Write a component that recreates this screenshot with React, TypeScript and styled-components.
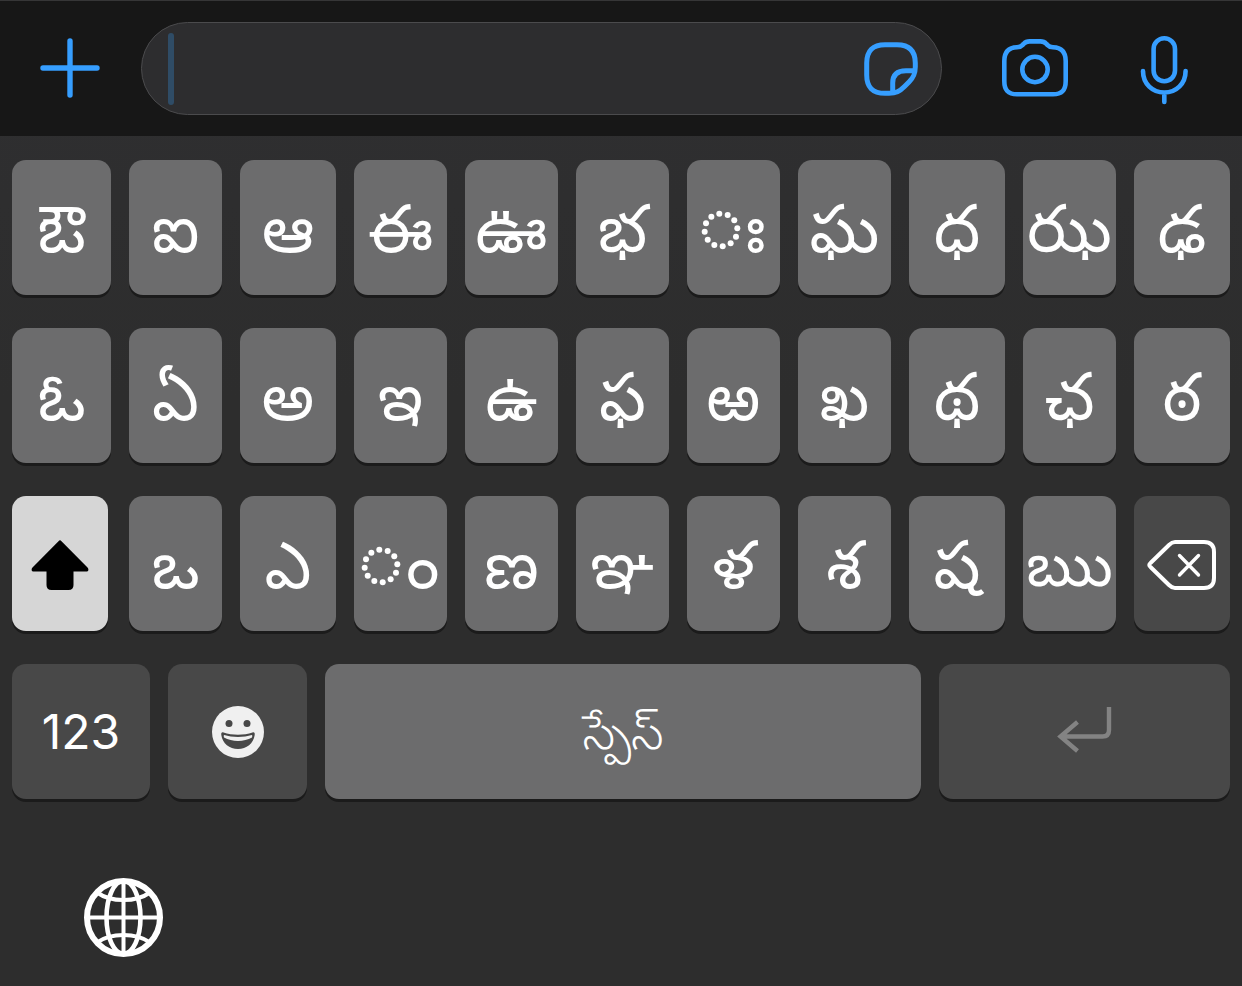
import React from "react";
import styled, { createGlobalStyle } from "styled-components";

const GlobalStyle = createGlobalStyle`
  *, *::before, *::after { box-sizing: border-box; }
  body { margin: 0; background: #2d2d2d; }
  button { margin: 0; padding: 0; border: 0; background: none; color: inherit; font: inherit; cursor: pointer; }
  svg { display: block; flex: none; }
`;

const Screen = styled.main`
  min-height: 100vh;
  display: flex;
  flex-direction: column;
  background: linear-gradient(#2f2f31, #2d2d2d 400px);
  color: #fff;
  font-family: Inter, "Noto Sans Telugu", "Noto Sans", sans-serif;
`;

const Toolbar = styled.header`
  display: flex;
  align-items: center;
  height: 136px;
  padding: 0 54px 0 40px;
  border-top: 1px solid #363637;
  background: #171717;
  color: #369eff;
`;

const IconButton = styled.button<{ $before?: number }>`
  flex: none;
  margin-left: ${(p) => p.$before ?? 0}px;
`;

const Composer = styled.div`
  flex: 1;
  min-width: 0;
  display: flex;
  align-items: center;
  height: 93px;
  margin-left: 41px;
  padding: 0 23px 0 26px;
  border: 1px solid #4b4b4d;
  border-radius: 47px;
  background: #2d2d2f;
`;

const Caret = styled.span`
  flex: none;
  width: 6px;
  height: 72px;
  border-radius: 3px;
  background: #2f4c66;
`;

const MessageInput = styled.input`
  flex: 1;
  min-width: 0;
  height: 72px;
  padding: 0 8px;
  border: 0;
  outline: 0;
  background: transparent;
  color: #fff;
  font: inherit;
  font-size: 48px;
`;

const Keyboard = styled.section`
  display: flex;
  flex-direction: column;
  gap: 33px;
  padding: 24px 12px 0;
`;

const LetterRow = styled.div`
  display: grid;
  grid-template-columns: 99fr 93fr 96fr repeat(5, 93fr) 96fr 93fr 96fr;
  gap: 18px;
`;

const BottomRow = styled.div`
  display: grid;
  grid-template-columns: 138fr 139fr 596fr 291fr;
  gap: 18px;
`;

const tones = {
  light: "#6c6c6d",
  dark: "#484848",
  active: "#d6d6d6",
};

const Key = styled.button<{ $tone?: keyof typeof tones; $size?: number; $thin?: boolean }>`
  display: flex;
  align-items: center;
  justify-content: center;
  min-width: 0;
  height: 135px;
  border-radius: 14px;
  background: ${(p) => tones[p.$tone ?? "light"]};
  box-shadow: 0 3px 0 #1b1b1b;
  font-size: ${(p) => p.$size ?? 66}px;
  font-weight: ${(p) => (p.$thin ? 300 : 400)};
  line-height: 72px;
  white-space: nowrap;
`;

const ShiftKey = styled(Key)`
  margin-right: 3px;
  color: #000;
`;

const ReturnKey = styled(Key)`
  color: #838383;
`;

/* The sign is carried by a no-break space, which the placeholder ring overlaps. */
const Sign = styled.span`
  margin-left: -14px;
`;

const Footer = styled.footer`
  padding: 79px 84px 28px;
`;

const PlusIcon = () => (
  <svg width="60" height="61" viewBox="0 0 60 61" fill="none" stroke="currentColor" strokeWidth="5.4" strokeLinecap="round" aria-hidden="true">
    <path d="M30 3v54M3 30h54" />
  </svg>
);

const StickerIcon = () => (
  <svg width="54" height="54" viewBox="0 0 54 54" fill="none" stroke="currentColor" strokeWidth="5" strokeLinejoin="round" aria-hidden="true">
    <path d="M51.300 21V25C51.300 32 49.500 35.500 45 40L40.500 44.500C35.500 49.500 32 51.300 25 51.300H21C8.500 51.300 2.700 45 2.700 33V21C2.700 8.500 9 2.700 21 2.700H33C45 2.700 51.300 8.500 51.300 21Z" />
    <path d="M50.300 28.700H42C33 28.700 28.700 33 28.700 41V50.500" />
  </svg>
);

const CameraIcon = () => (
  <svg width="66" height="59" viewBox="0 0 66 59" fill="none" stroke="currentColor" strokeWidth="4.6" strokeLinejoin="round" aria-hidden="true">
    <path d="M2.300 22C2.300 13 6.500 8.600 15 8.300C19 8.200 19.500 7 21.500 5C23.400 3 24.500 2.400 27.500 2.400H38.500C41.500 2.400 42.600 3 44.500 5C46.500 7 47 8.200 51 8.300C59.500 8.600 63.700 13 63.700 22V42C63.700 51 60 55.300 51 55.300H15C6 55.300 2.300 51 2.300 42Z" />
    <circle cx="33" cy="30.500" r="12.700" />
  </svg>
);

const MicIcon = () => (
  <svg width="48" height="69" viewBox="-0.6 -2 48 69" overflow="visible" fill="none" stroke="currentColor" strokeWidth="4.6" strokeLinecap="round" aria-hidden="true">
    <rect x="13" y="2.300" width="21.400" height="43" rx="10.700" />
    <path d="M2.400 35C2.400 48 12 56.500 23.700 56.500S45 48 45 35M23.700 57v9" />
  </svg>
);

const ShiftIcon = () => (
  <svg width="58" height="53" viewBox="0 -3 58 53" fill="currentColor" aria-hidden="true">
    <path d="M27.500 1.200a2 2 0 0 1 3 0L56.500 27.500c1.600 1.900 1 4-1.200 4H42.500V45q0 5-5 5h-17q-5 0-5-5V31.500H2.700c-2.200 0-2.800-2.100-1.200-4Z" />
  </svg>
);

const BackspaceIcon = () => (
  <svg width="70" height="53" viewBox="0 -3 70 53" fill="none" stroke="currentColor" strokeWidth="4" strokeLinecap="round" strokeLinejoin="round" aria-hidden="true">
    <path d="M28 2H57Q67 2 67 12V38Q67 48 57 48H28Q25 48 22 45L3.500 27Q1 25 3.500 23L22 5Q25 2 28 2Z" />
    <path d="M32.500 15.500L51.500 35M51.500 15.500L32.500 35" strokeWidth="3.4" />
  </svg>
);

const SmileyIcon = () => (
  <svg width="52" height="52" viewBox="0 0 52 52" aria-hidden="true">
    <circle cx="26" cy="26" r="26" fill="#f0f0f0" />
    <circle cx="17" cy="17.500" r="3.500" fill="#484848" />
    <circle cx="35" cy="17.500" r="3.500" fill="#484848" />
    <path d="M11.500 26.500C20 29.500 32 29.500 40.500 26.500C42.300 26 43 27 42.700 29C41.500 37.500 34.500 43 26 43S10.500 37.500 9.300 29C9 27 9.700 26 11.500 26.500Z" fill="#484848" />
    <path d="M12.200 29C20 31.500 32 31.500 39.800 29Q40.800 29 40 31.500C32 36 20 36 12 31.500Q11.200 29 12.200 29Z" fill="#f0f0f0" />
  </svg>
);

const ReturnIcon = () => (
  <svg width="56" height="50" viewBox="0 0 56 50" fill="none" stroke="currentColor" strokeWidth="4.4" aria-hidden="true">
    <path d="M52 0V23Q52 29.500 45.500 29.500H3M20.500 15L3.500 29.500L20.500 44" />
  </svg>
);

const GlobeIcon = () => (
  <svg width="79" height="79" viewBox="0 0 79 79" fill="none" stroke="currentColor" strokeWidth="4" aria-hidden="true">
    <circle cx="39.500" cy="39.500" r="36.500" strokeWidth="6" />
    <ellipse cx="39.500" cy="39.500" rx="17" ry="36.500" strokeWidth="4.6" />
    <path d="M39.500 3v73M3 39.500h73" />
    <path d="M13 14.500C27 24.500 52 24.500 66 14.500M13 64.500C27 54.500 52 54.500 66 64.500" />
  </svg>
);

const ringAngles = Array.from({ length: 12 }, (_, i) => ((i * 30 - 96) * Math.PI) / 180);

const PlaceholderRing = () => (
  <svg width="40" height="44" viewBox="-20 -24 40 44" fill="currentColor" aria-hidden="true">
    {ringAngles.map((a) => (
      <circle key={a} cx={16.4 * Math.cos(a)} cy={16.4 * Math.sin(a)} r="3" />
    ))}
  </svg>
);

const topRow = ["ఔ", "ఐ", "ఆ", "ఈ", "ఊ", "భ", "ః", "ఘ", "ధ", "ఝ", "ఢ"];
const homeRow = ["ఓ", "ఏ", "అ", "ఇ", "ఉ", "ఫ", "ఱ", "ఖ", "థ", "ఛ", "ఠ"];
const lowerRow = ["ఒ", "ఎ", "ం", "ణ", "ఞ", "ళ", "శ", "ష", "ఋ"];

const dependentSigns = ["ః", "ం"];
const wideLetters = ["ఋ"];

const letterKeys = (letters: string[]) =>
  letters.map((letter) =>
    dependentSigns.includes(letter) ? (
      <Key key={letter} type="button" aria-label={letter}>
        <PlaceholderRing />
        <Sign>{"\u00a0" + letter}</Sign>
      </Key>
    ) : (
      <Key key={letter} type="button" $size={wideLetters.includes(letter) ? 60 : 66}>
        {letter}
      </Key>
    )
  );

export default function App() {
  return (
    <Screen>
      <GlobalStyle />
      <Toolbar>
        <IconButton type="button" aria-label="Add attachment">
          <PlusIcon />
        </IconButton>
        <Composer>
          <Caret />
          <MessageInput type="text" aria-label="Message" />
          <IconButton type="button" aria-label="Stickers">
            <StickerIcon />
          </IconButton>
        </Composer>
        <IconButton type="button" aria-label="Camera" $before={60}>
          <CameraIcon />
        </IconButton>
        <IconButton type="button" aria-label="Record voice" $before={72}>
          <MicIcon />
        </IconButton>
      </Toolbar>
      <Keyboard lang="te" aria-label="Keyboard">
        <LetterRow>{letterKeys(topRow)}</LetterRow>
        <LetterRow>{letterKeys(homeRow)}</LetterRow>
        <LetterRow>
          <ShiftKey type="button" $tone="active" aria-label="Shift">
            <ShiftIcon />
          </ShiftKey>
          {letterKeys(lowerRow)}
          <Key type="button" $tone="dark" aria-label="Delete">
            <BackspaceIcon />
          </Key>
        </LetterRow>
        <BottomRow>
          <Key type="button" $tone="dark" $size={48}>
            123
          </Key>
          <Key type="button" $tone="dark" aria-label="Emoji">
            <SmileyIcon />
          </Key>
          <Key type="button" $size={48} $thin>
            స్పేస్
          </Key>
          <ReturnKey type="button" $tone="dark" aria-label="Return">
            <ReturnIcon />
          </ReturnKey>
        </BottomRow>
      </Keyboard>
      <Footer>
        <IconButton type="button" aria-label="Next keyboard">
          <GlobeIcon />
        </IconButton>
      </Footer>
    </Screen>
  );
}
